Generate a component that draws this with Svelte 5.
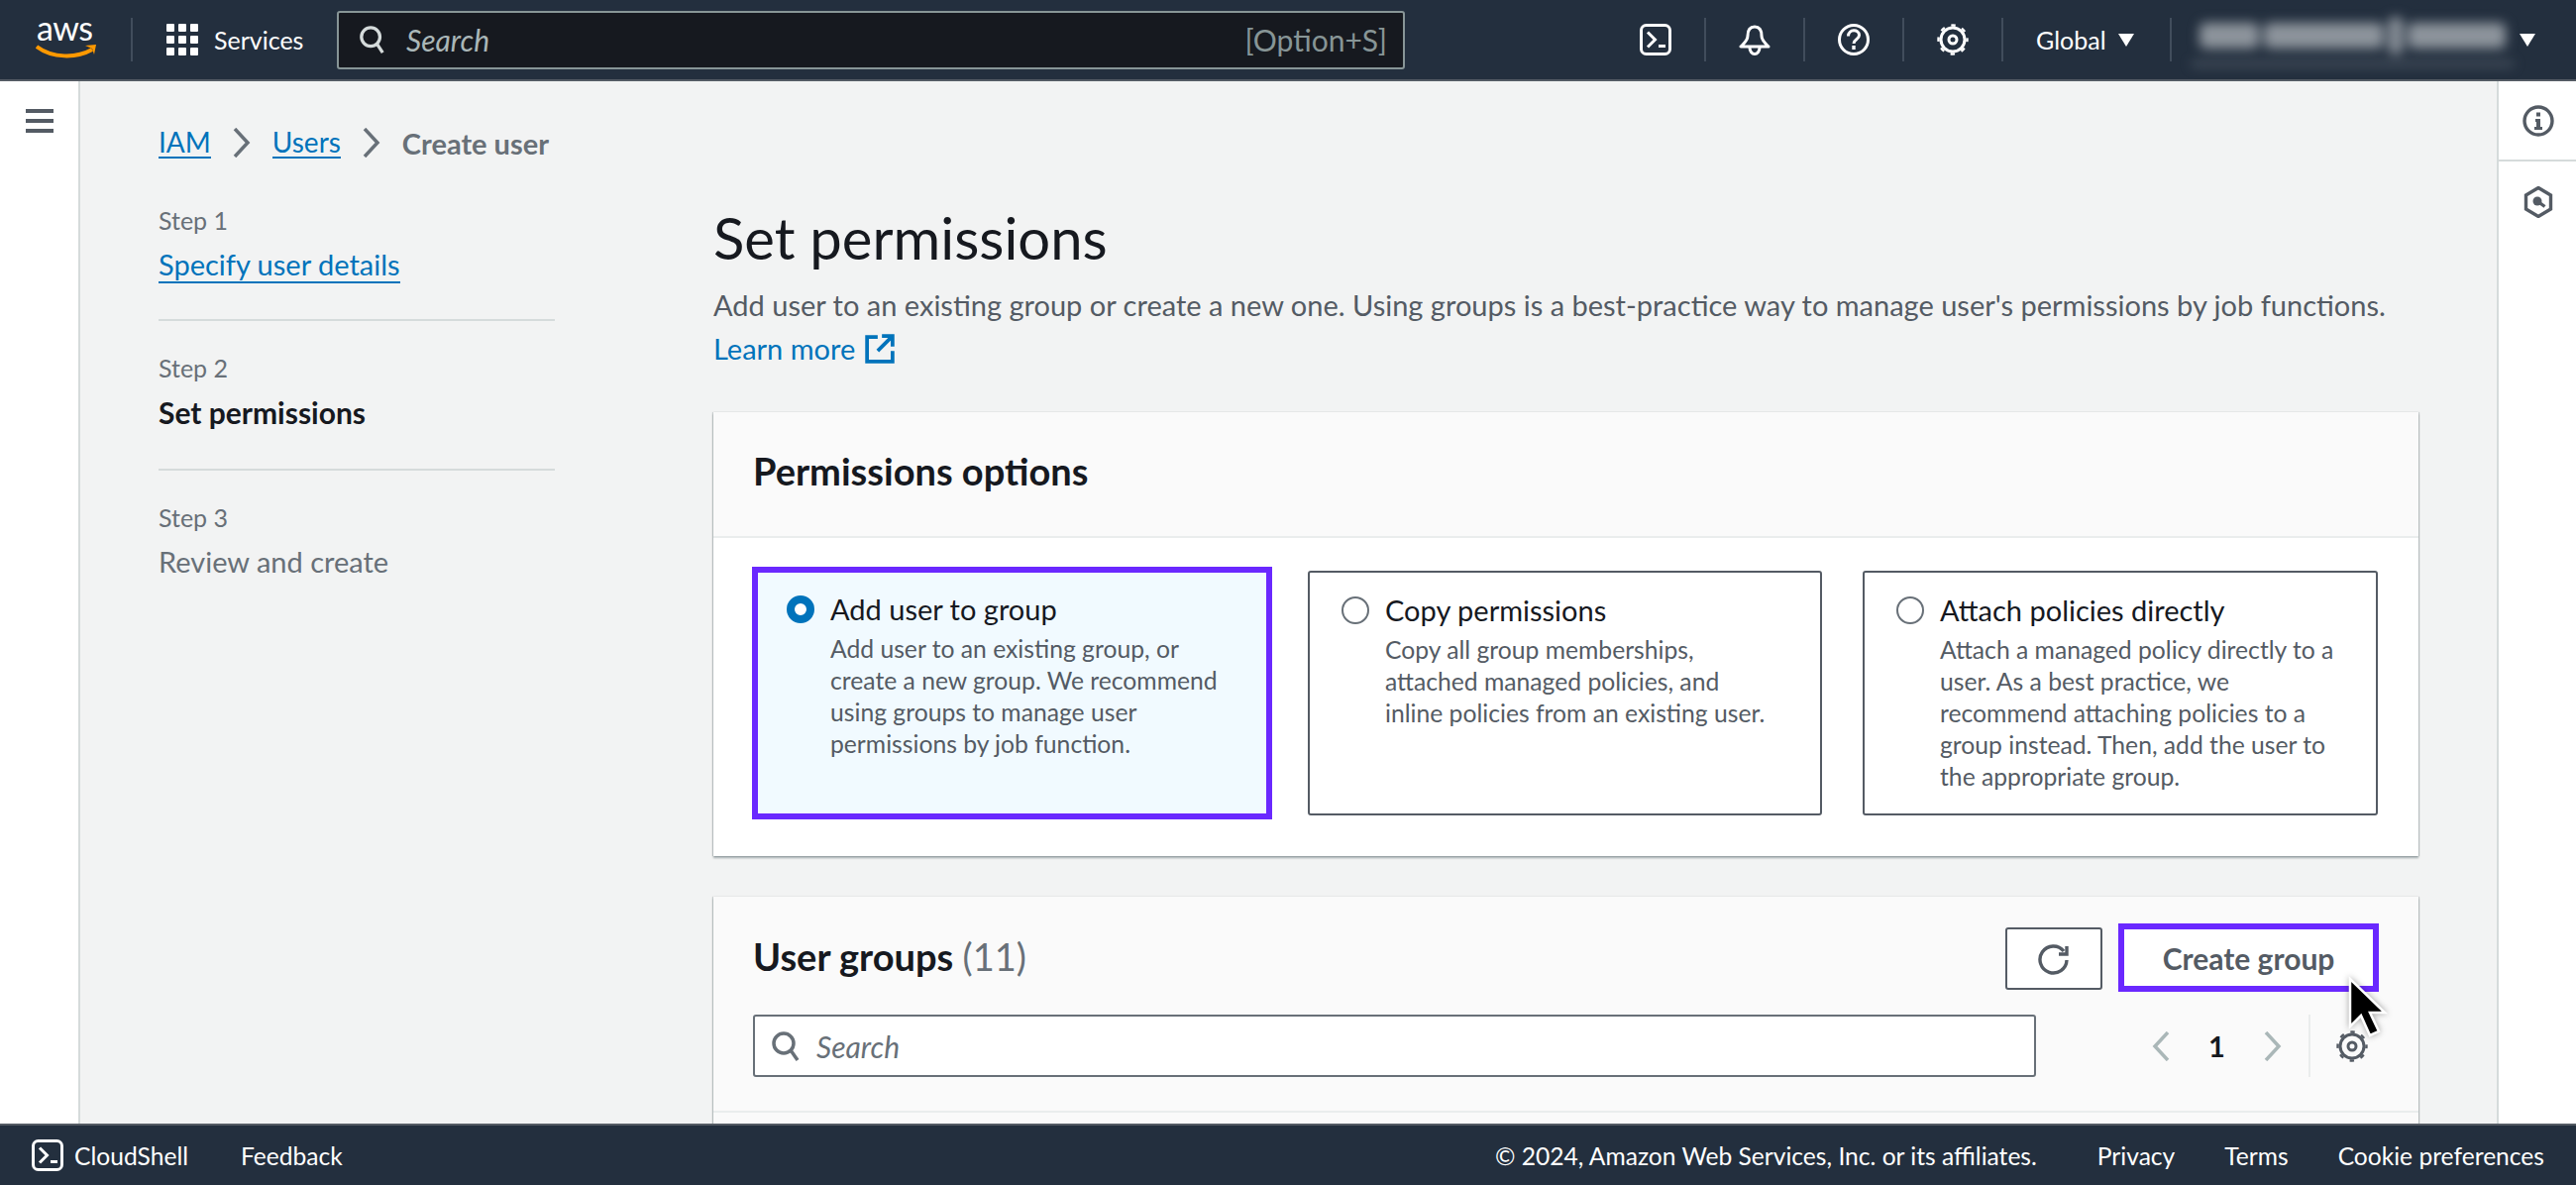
<script>
  const steps = [
    { n: 'Step 1', label: 'Specify user details', kind: 'link' },
    { n: 'Step 2', label: 'Set permissions', kind: 'active' },
    { n: 'Step 3', label: 'Review and create', kind: 'todo' }
  ];
  const options = [
    { title: 'Add user to group', on: true, text: 'Add user to an existing group, or create a new group. We recommend using groups to manage user permissions by job function.' },
    { title: 'Copy permissions', on: false, text: 'Copy all group memberships, attached managed policies, and inline policies from an existing user.' },
    { title: 'Attach policies directly', on: false, text: 'Attach a managed policy directly to a user. As a best practice, we recommend attaching policies to a group instead. Then, add the user to the appropriate group.' }
  ];
</script>

<div class="page">
  <header class="top">
    <div class="logo">
      <span class="aws">aws</span>
      <svg class="smile" viewBox="0 0 62 14"><path d="M1 2c16 12 40 12 56 3" fill="none" stroke="#f90" stroke-width="4"/><path d="M50 1l11-1-2 10-2-6z" fill="#f90"/></svg>
    </div>
    <i class="sep logo-sep"></i>
    <svg class="grid-ic" viewBox="0 0 32 32" fill="#fff">
      {#each [0,12,24] as y}{#each [0,12,24] as x}<rect x={x} y={y} width="8" height="8" rx="1"/>{/each}{/each}
    </svg>
    <span class="services">Services</span>
    <div class="search">
      <svg class="s-ic" viewBox="0 0 30 34" fill="none" stroke="#d5dbdb" stroke-width="3.5"><circle cx="13" cy="14" r="10"/><path d="M20 22l6 9"/></svg>
      <span class="ph">Search</span>
      <span class="shortcut">[Option+S]</span>
    </div>
    <div class="tools">
      <svg class="t-ic" viewBox="0 0 32 32" fill="none" stroke="#fff" stroke-width="3"><rect x="1.5" y="1.5" width="29" height="29" rx="5"/><path d="M8 8.5l7.5 7.5L8 23.5"/><path d="M19 22.5h7"/></svg>
      <i class="sep"></i>
      <svg class="t-ic" viewBox="0 0 32 32" fill="none" stroke="#fff" stroke-width="3"><path d="M16 3c-5 0-7 4-7 9 0 5-4 8-7 11h28c-3-3-7-6-7-11 0-5-2-9-7-9z" stroke-linejoin="round"/><path d="M11 24c0 4 2.5 6.5 5 6.5s5-2.5 5-6.5"/></svg>
      <i class="sep"></i>
      <svg class="t-ic" viewBox="0 0 32 32" fill="none" stroke="#fff" stroke-width="3"><circle cx="16" cy="16" r="14.5"/><path d="M10.5 12.5c0-7.5 11-7.5 11-1 0 4.5-5.500 4-5.500 8.500"/><path d="M16 22v4" stroke-width="3.4"/></svg>
      <i class="sep"></i>
      <svg class="t-ic" viewBox="0 0 32 32" fill="none" stroke="#fff" stroke-width="3"><circle cx="16" cy="16" r="12"/><circle cx="16" cy="16" r="14.5" stroke-width="2.4" stroke-dasharray="4.5 6.9" stroke-dashoffset="2.25"/><circle cx="16" cy="16" r="4"/></svg>
      <i class="sep"></i>
      <span class="region">Global</span><span class="caret"></span>
      <i class="sep user-sep"></i>
      <div class="user" aria-hidden="true"><b></b><b></b><b></b><b></b></div>
      <span class="caret last"></span>
    </div>
  </header>

  <div class="body">
    <nav class="rail">
      <div class="burger"><i></i><i></i><i></i></div>
    </nav>

    <main class="main">
      <div class="crumbs">
        <a href="#iam">IAM</a>
        <svg class="chev" viewBox="0 0 18 30" fill="none" stroke="#687078" stroke-width="3.5"><path d="M2 1l13 14L2 29"/></svg>
        <a href="#users">Users</a>
        <svg class="chev" viewBox="0 0 18 30" fill="none" stroke="#687078" stroke-width="3.5"><path d="M2 1l13 14L2 29"/></svg>
        <span>Create user</span>
      </div>

      <div class="columns">
        <ol class="steps">
          {#each steps as s}
            <li>
              <small>{s.n}</small>
              {#if s.kind === 'link'}<a href="#s">{s.label}</a>{:else}<span class={s.kind}>{s.label}</span>{/if}
            </li>
          {/each}
        </ol>

        <section class="content">
          <h1>Set permissions</h1>
          <p class="lead">Add user to an existing group or create a new one. Using groups is a best-practice way to manage user's permissions by job functions.</p>
          <a class="learn" href="#l">Learn more
            <svg viewBox="0 0 28 28" fill="none" stroke="#0073bb" stroke-width="3.5"><path d="M12 3H2v23h24V16M16 2h10v10M26 2L12 16"/></svg>
          </a>

          <div class="card first">
            <div class="card-head"><h2>Permissions options</h2></div>
            <div class="tiles">
              {#each options as o}
                <div class="tile" class:on={o.on}>
                  <span class="radio"></span>
                  <div class="tile-text">
                    <strong>{o.title}</strong>
                    <p>{o.text}</p>
                  </div>
                </div>
              {/each}
            </div>
          </div>

          <div class="card second">
            <div class="groups-head">
              <h2>User groups <span>(11)</span></h2>
              <button class="refresh" aria-label="Refresh">
                <svg viewBox="0 0 34 32" fill="none" stroke="#545b64" stroke-width="3.4"><path d="M27 8a13.5 13.5 0 1 0 3 9"/><path d="M30 3v8h-8" /></svg>
              </button>
              <button class="create">Create group</button>
              <svg class="cursor" viewBox="0 0 44 66"><path d="M5 3v48l11-11 9 20 9-4-9-19h15z" fill="#000" stroke="#fff" stroke-width="2.5"/></svg>
            </div>
            <div class="filter-row">
              <div class="filter">
                <svg viewBox="0 0 30 32" fill="none" stroke="#687078" stroke-width="3.5"><circle cx="13" cy="13" r="10"/><path d="M20 20l7 10"/></svg>
                <span>Search</span>
              </div>
              <div class="pager">
                <svg viewBox="0 0 18 30" fill="none" stroke="#aab7b8" stroke-width="3.5"><path d="M16 1L3 15l13 14"/></svg>
                <b>1</b>
                <svg viewBox="0 0 18 30" fill="none" stroke="#aab7b8" stroke-width="3.5"><path d="M2 1l13 14L2 29"/></svg>
              </div>
              <i class="pager-sep"></i>
              <svg class="pref" viewBox="0 0 32 32" fill="none" stroke="#545b64" stroke-width="3"><circle cx="16" cy="16" r="12"/><circle cx="16" cy="16" r="14.5" stroke-width="2.4" stroke-dasharray="4.5 6.9" stroke-dashoffset="2.25"/><circle cx="16" cy="16" r="4"/></svg>
            </div>
            <div class="table-top"></div>
          </div>
        </section>
      </div>
    </main>

    <aside class="tools-rail">
      <div class="rail-btn">
        <svg viewBox="0 0 32 32" fill="none" stroke="#545b64" stroke-width="3.4"><circle cx="16" cy="16" r="14"/><path d="M14 7.5h4v4h-4zM13 14h5v8h2v3h-8v-3h2v-5h-1z" fill="#545b64" stroke="none"/></svg>
      </div>
      <div class="rail-btn">
        <svg viewBox="0 0 32 32" fill="none" stroke="#545b64" stroke-width="3.4"><path d="M16 1.5L28.500 9v14L16 30.500 3.500 23V9z"/><circle cx="15" cy="15" r="4.500" fill="#545b64" stroke="none"/><path d="M15 15l7.500 5.500"/></svg>
      </div>
    </aside>
  </div>

  <footer class="foot">
    <svg class="foot-ic" viewBox="0 0 32 32" fill="none" stroke="#fff" stroke-width="3"><rect x="1.5" y="1.5" width="29" height="29" rx="5"/><path d="M8 8.5l7.5 7.5L8 23.5"/><path d="M19 22.5h7"/></svg>
    <span class="cs">CloudShell</span>
    <span class="fb">Feedback</span>
    <span class="copy">© 2024, Amazon Web Services, Inc. or its affiliates.</span>
    <span class="fl">Privacy</span>
    <span class="fl">Terms</span>
    <span class="fl">Cookie preferences</span>
  </footer>
</div>

<style>
  :global(body) { margin: 0; }
  * { box-sizing: border-box; }
  .page {
    height: 1196px; width: 2600px; display: flex; flex-direction: column; overflow: hidden;
    font-family: "Lato", "Noto Sans", sans-serif; font-size: 29px; color: #16191f; background: #f2f3f3;
  }
  a { color: #0073bb; text-decoration: none; border-bottom: 2px solid #0073bb; }

  .top {
    height: 82px; flex: none; background: #232f3e; border-bottom: 2px solid #545b64;
    display: flex; align-items: center; color: #fff; padding-left: 36px;
  }
  .logo { width: 62px; height: 40px; position: relative; margin-top: -2px; }
  .aws { position: absolute; left: 1px; top: -8px; font-size: 34px; line-height: 34px; color: #fff; letter-spacing: -.5px; }
  .smile { position: absolute; left: 0; top: 26px; width: 62px; height: 14px; }
  .sep { display: block; width: 2px; height: 44px; background: #414d5c; flex: none; }
  .logo-sep { margin: 0 34px; }
  .grid-ic { width: 32px; height: 32px; flex: none; }
  .services { margin-left: 16px; width: 124px; font-size: 25px; }
  .search {
    width: 1078px; height: 59px; background: #16191f; border: 2px solid #879596; border-radius: 3px;
    display: flex; align-items: center; padding: 0 16px 0 20px;
  }
  .s-ic { width: 28px; height: 32px; margin-right: 20px; }
  .ph { color: #aab7b8; font-style: italic; font-size: 30px; flex: 1; }
  .shortcut { color: #879596; font-size: 30px; }
  .tools { display: flex; align-items: center; margin-left: 237px; }
  .t-ic { width: 32px; height: 32px; flex: none; }
  .tools .sep { margin: 0 33px; }
  .region { font-size: 25px; width: 72px; }
  .caret { width: 0; height: 0; border-left: 8px solid transparent; border-right: 8px solid transparent; border-top: 13px solid #fff; margin-left: 11px; flex: none; }
  .caret.last { margin-left: 6px; }
  .tools .user-sep { margin: 0 20px 0 36px; }
  .user { width: 325px; height: 52px; display: flex; align-items: center; justify-content: space-between; padding: 0 8px 6px; gap: 5px; border-bottom: 3px solid #6b7480; filter: blur(6px); }
  .user b { height: 26px; background: #8d949c; border-radius: 6px; flex: 1; }
  .user b:nth-child(1) { flex: 1.1; }
  .user b:nth-child(2) { flex: 2.2; }
  .user b:nth-child(3) { flex: .25; height: 38px; }
  .user b:nth-child(4) { flex: 1.8; }

  .body { flex: 1; min-height: 0; display: flex; overflow: hidden; }
  .rail { width: 81px; flex: none; background: #fff; border-right: 2px solid #d5dbdb; padding: 28px 0 0 26px; }
  .burger { width: 28px; display: flex; flex-direction: column; gap: 6px; }
  .burger i { display: block; height: 4px; background: #545b64; }
  .main { flex: 1; min-width: 0; padding: 34px 79px 0 79px; }
  .crumbs { display: flex; align-items: center; height: 56px; gap: 22px; font-size: 29px; color: #687078; font-weight: 700; }
  .crumbs a { font-weight: 400; line-height: 30px; font-size: 28px; }
  .chev { width: 18px; height: 30px; flex: none; }
  .columns { display: flex; gap: 160px; }
  .steps { list-style: none; margin: 26px 0 0; padding: 0; width: 400px; flex: none; }
  .steps li { display: flex; flex-direction: column; align-items: flex-start; height: 151px; padding-top: 30px; border-bottom: 2px solid #d5dbdb; }
  .steps li:first-child { height: 126px; padding-top: 6px; }
  .steps li:last-child { border: 0; }
  .steps small { font-size: 25px; line-height: 36px; color: #687078; }
  .steps a, .steps span { font-size: 29px; line-height: 36px; margin-top: 9px; }
  .steps a { line-height: 34px; margin-top: 10px; }
  .steps li + li small { margin-top: -1px; }
  .steps .active { font-weight: 700; font-size: 30px; }
  .todo { color: #687078; }
  .content { flex: 1; min-width: 0; }
  h1 { margin: 33px 0 0; font-size: 58px; line-height: 70px; font-weight: 400; }
  .lead { margin: 11px 0 0; font-size: 29px; line-height: 44px; color: #545b64; }
  .learn { display: inline-flex; align-items: center; gap: 10px; border: 0; font-size: 29px; line-height: 44px; }
  .learn svg { width: 30px; height: 30px; }
  .card { background: #fff; box-shadow: 0 2px 2px rgba(0,28,36,.35), 1px 0 1px rgba(0,28,36,.15), -1px 0 1px rgba(0,28,36,.15); }
  .first { height: 448px; margin-top: 42px; }
  .card-head { height: 127px; background: #fafafa; border-bottom: 2px solid #eaeded; padding: 0 40px 8px; display: flex; align-items: center; }
  h2 { margin: 0; font-size: 38px; font-weight: 700; line-height: 44px; }
  h2 span { font-weight: 400; color: #687078; }
  .tiles { display: flex; gap: 41px; padding: 33px 40px 0 39px; }
  .tile { width: 519px; flex: none; height: 247px; border: 2px solid #545b64; border-radius: 3px; padding: 22px 32px; display: flex; gap: 16px; }
  .tile:last-child { width: 520px; }
  .tile.on { width: 525px; margin: -4px -5px -4px 0; background: #f1faff; border: 6px solid #6a28ff; border-radius: 0; height: 255px; padding: 21px 29px; }
  .radio { width: 28px; height: 28px; border-radius: 50%; border: 2px solid #687078; flex: none; background: #fff; margin-top: 2px; }
  .on .radio { border: 8px solid #0073bb; }
  .tile-text { min-width: 0; }
  .tile strong { display: block; font-size: 29px; line-height: 32px; font-weight: 400; }
  .tile p { margin: 8px 0 0; font-size: 24.7px; line-height: 32px; color: #545b64; max-width: 401px; }
  .second { margin-top: 41px; height: 340px; background: #fafafa; }
  .groups-head { height: 119px; padding: 27px 40px 0; display: flex; align-items: flex-start; position: relative; }
  .groups-head h2 { flex: 1; line-height: 42px; margin-top: 12px; }
  button { font: inherit; background: #fff; padding: 0; }
  .refresh { width: 98px; height: 63px; border: 2px solid #545b64; border-radius: 3px; margin: 4px 16px 0 0; display: flex; align-items: center; justify-content: center; }
  .refresh svg { width: 34px; height: 32px; }
  .create { width: 263px; height: 69px; border: 6px solid #6a28ff; color: #545b64; font-weight: 700; font-size: 30px; }
  .cursor { position: absolute; left: 1647px; top: 80px; width: 44px; height: 66px; filter: drop-shadow(0 0 3px rgba(0,0,0,.35)); }
  .filter-row { display: flex; align-items: center; height: 63px; padding-left: 40px; }
  .filter { width: 1295px; height: 63px; background: #fff; border: 2px solid #687078; border-radius: 3px; display: flex; align-items: center; padding-left: 16px; gap: 16px; color: #687078; font-style: italic; font-size: 30px; }
  .filter svg { width: 30px; height: 32px; }
  .pager { display: flex; align-items: center; margin-left: 117px; width: 131px; justify-content: space-between; }
  .pager svg { width: 18px; height: 30px; }
  .pager b { font-size: 29px; }
  .pager-sep { display: block; width: 2px; height: 63px; background: #eaeded; margin-left: 27px; }
  .pref { width: 32px; height: 32px; margin-left: 26px; }
  .table-top { margin-top: 34px; border-top: 2px solid #eaeded; }
  .tools-rail { width: 80px; flex: none; background: #fff; border-left: 2px solid #d5dbdb; }
  .rail-btn { height: 81px; display: flex; align-items: center; justify-content: center; border-bottom: 2px solid #d5dbdb; padding-left: 2px; }
  .rail-btn:nth-child(2) { border: 0; }
  .rail-btn svg { width: 32px; height: 32px; }

  .foot { height: 62px; flex: none; background: #232f3e; border-top: 2px solid #545b64; color: #fff; display: flex; align-items: center; padding-left: 32px; font-size: 24.6px; }
  .foot-ic { width: 32px; height: 32px; margin-right: 11px; }
  .cs { width: 168px; }
  .fb { flex: 1; }
  .copy { margin-right: 61px; }
  .fl { margin-right: 50px; }
  .fl:last-child { margin-right: 32px; }
</style>
